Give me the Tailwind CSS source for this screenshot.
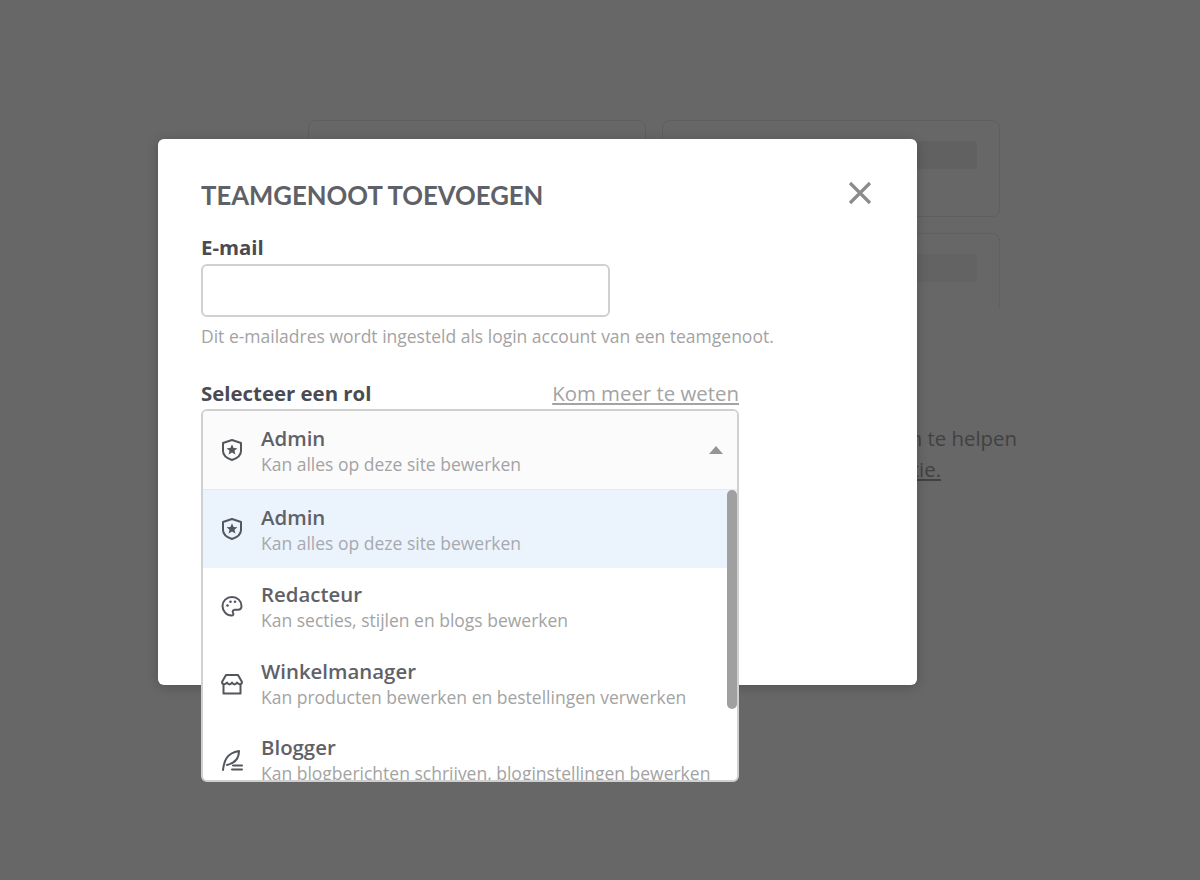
<!DOCTYPE html>
<html lang="nl">
<head>
<meta charset="utf-8">
<title>Teamgenoot toevoegen</title>
<script src="https://cdn.jsdelivr.net/npm/@tailwindcss/browser@4"></script>
</head>
<body class="bg-[#676767] font-['Open_Sans',sans-serif]">
<div class="relative w-[1200px] h-[880px] overflow-hidden">
  <!-- dimmed page behind -->
  <div class="pl-[308px] pt-[120px] w-[1000px]">
    <div class="flex gap-4">
      <div class="w-[338px] h-[97px] rounded-lg border border-[#5f5f5f]"></div>
      <div class="w-[338px]">
        <div class="h-[97px] rounded-lg border border-[#5f5f5f] pt-5 pl-5 pr-[22px]">
          <div class="h-7 bg-[#616162] rounded-sm"></div>
        </div>
        <div class="mt-4 h-[76px] rounded-t-lg border border-b-0 border-[#606060] pt-5 pl-5 pr-[22px]">
          <div class="h-7 bg-[#636364] rounded-sm"></div>
        </div>
      </div>
    </div>
    <p class="mt-[112px] text-right w-[709px] text-[20.400px] leading-[34px] text-[#414141]">n te helpen</p>
    <p class="text-right w-[633px] text-[20.400px] leading-[28px] text-[#414141] underline">informatie.</p>
  </div>

  <!-- modal -->
  <div class="absolute left-[158px] top-[139px] w-[759px] h-[546px] bg-white rounded-md shadow-[0_2px_12px_rgba(0,0,0,0.2)] pl-[43px] pt-[40px]">
    <div class="flex items-center justify-between pr-[45px]">
      <h2 class="font-['Lato',sans-serif] font-bold text-[25.700px] leading-[32px] text-[#5f6168]">TEAMGENOOT TOEVOEGEN</h2>
      <svg class="w-6 h-6 -mt-1 text-[#8b8b8b]" viewBox="0 0 24 24" fill="none" stroke="currentColor" stroke-width="3.200"><path d="M2 2 22 22M22 2 2 22"/></svg>
    </div>
    <label class="block mt-[22px] font-bold text-[20.400px] leading-[28px] text-[#4a4b52]">E-mail</label>
    <div class="w-[409px] h-[53px] mt-[3px] rounded-md border-2 border-[#d0d0d0] bg-white"></div>
    <p class="mt-[7px] text-[17.500px] leading-[24px] text-[#a3a3a3]">Dit e-mailadres wordt ingesteld als login account van een teamgenoot.</p>
    <div class="w-[538px] flex items-center justify-between mt-[31px]">
      <span class="font-bold text-[20.400px] leading-[28px] text-[#4a4b52]">Selecteer een rol</span>
      <a class="text-[20.400px] leading-[28px] text-[#a3a3a3] underline underline-offset-2">Kom meer te weten</a>
    </div>

    <!-- role select -->
    <div class="relative w-[538px] h-[373px] mt-[2px] rounded-md border-2 border-[#d0d0d0] bg-white overflow-hidden">
      <div class="h-[80px] border-b-2 border-[#e8e8e8] bg-[#fbfbfb] flex items-center pl-[17px] pr-[14px]">
        <svg class="w-6 h-6 text-[#54565d] shrink-0" viewBox="0 0 24 24" fill="none" stroke="currentColor" stroke-width="2" stroke-linejoin="round"><path d="M12 2 21 5V13C21 17.500 16.500 20.500 12 22 7.500 20.500 3 17.500 3 13V5Z"/><path fill="currentColor" stroke="none" d="M12 6.300 13.600 9.900 17.400 10.300 14.500 12.800 15.400 16.600 12 14.500 8.600 16.600 9.500 12.800 6.600 10.300 10.400 9.900Z"/></svg>
        <div class="ml-[17px] flex-1">
          <div class="font-semibold text-[20.400px] leading-[27px] text-[#5f6168]">Admin</div>
          <div class="text-[17.500px] leading-[24px] text-[#a3a3a3]">Kan alles op deze site bewerken</div>
        </div>
        <div class="w-0 h-0 border-x-[7px] border-x-transparent border-b-[8px] border-b-[#959595]"></div>
      </div>
      <div class="relative -mt-[1px]">
        <div class="h-[78px] bg-[#ebf3fd] flex items-center pl-[17px]">
          <svg class="w-6 h-6 text-[#54565d] shrink-0" viewBox="0 0 24 24" fill="none" stroke="currentColor" stroke-width="2" stroke-linejoin="round"><path d="M12 2 21 5V13C21 17.500 16.500 20.500 12 22 7.500 20.500 3 17.500 3 13V5Z"/><path fill="currentColor" stroke="none" d="M12 6.300 13.600 9.900 17.400 10.300 14.500 12.800 15.400 16.600 12 14.500 8.600 16.600 9.500 12.800 6.600 10.300 10.400 9.900Z"/></svg>
          <div class="ml-[17px]">
            <div class="font-semibold text-[20.400px] leading-[27px] text-[#5f6168]">Admin</div>
            <div class="text-[17.500px] leading-[24px] text-[#a7a9ae]">Kan alles op deze site bewerken</div>
          </div>
        </div>
        <div class="h-[76px] flex items-center pl-[17px]">
          <svg class="w-6 h-6 text-[#54565d] shrink-0" viewBox="0 0 24 24" fill="none" stroke="currentColor" stroke-width="2" stroke-linejoin="round"><path d="M12 3C6.500 3 2.500 7 2.500 12S6.500 21.500 11.500 21.500C13.500 21.500 13.800 20 13 18.800 12.200 17.500 13 15.800 14.800 15.800H18C20.200 15.800 21.500 14.200 21.500 12 21.500 7 17.500 3 12 3Z"/><circle cx="7.500" cy="11.500" r="1.300" fill="currentColor" stroke="none"/><circle cx="10.500" cy="7.800" r="1.300" fill="currentColor" stroke="none"/><circle cx="15" cy="7.800" r="1.300" fill="currentColor" stroke="none"/></svg>
          <div class="ml-[17px]">
            <div class="font-semibold text-[20.400px] leading-[27px] text-[#5f6168]">Redacteur</div>
            <div class="text-[17.500px] leading-[24px] text-[#a3a3a3]">Kan secties, stijlen en blogs bewerken</div>
          </div>
        </div>
        <div class="h-[77px] flex items-center pl-[17px] pt-[2px]">
          <svg class="w-6 h-6 text-[#54565d] shrink-0" viewBox="0 0 24 24" fill="none" stroke="currentColor" stroke-width="2" stroke-linejoin="round"><path d="M6 3H18L22 10C22 12.500 18.500 13 17 10.500 15.500 13 13.500 13 12 10.500 10.500 13 8.500 13 7 10.500 5.500 13 2 12.500 2 10Z"/><path d="M3.500 12V21.500H20.500V12"/></svg>
          <div class="ml-[17px]">
            <div class="font-semibold text-[20.400px] leading-[27px] text-[#5f6168]">Winkelmanager</div>
            <div class="text-[17.500px] leading-[24px] text-[#a3a3a3]">Kan producten bewerken en bestellingen verwerken</div>
          </div>
        </div>
        <div class="h-[77px] flex items-center pl-[17px]">
          <svg class="w-6 h-6 text-[#54565d] shrink-0" viewBox="0 0 24 24" fill="none" stroke="currentColor" stroke-width="2" stroke-linecap="round" stroke-linejoin="round"><path d="M3 22C4 14 6 5 19 3 19 10 16 15 7 17"/><path d="M13 17.500H22M12 21.500H22"/></svg>
          <div class="ml-[17px]">
            <div class="font-semibold text-[20.400px] leading-[27px] text-[#5f6168]">Blogger</div>
            <div class="text-[17.500px] leading-[24px] text-[#a3a3a3]">Kan blogberichten schrijven, bloginstellingen bewerken</div>
          </div>
        </div>
        <!-- scrollbar -->
        <div class="absolute right-0 top-0 w-[10px] h-[219px] rounded-full bg-[#a0a0a0]"></div>
      </div>
    </div>
  </div>
</div>
</body>
</html>
